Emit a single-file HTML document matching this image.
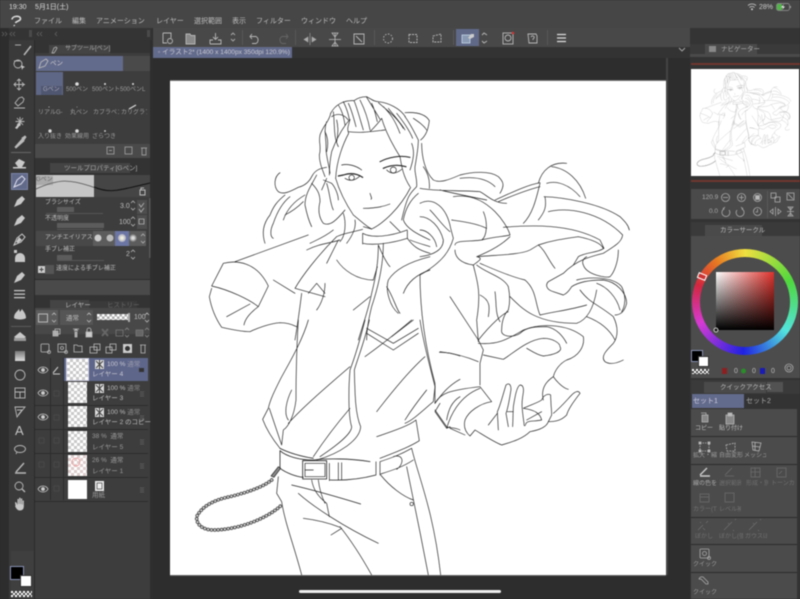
<!DOCTYPE html>
<html><head><meta charset="utf-8">
<style>
html,body{margin:0;padding:0;background:#2d2d2d}
#r{position:relative;width:800px;height:599px;overflow:hidden;background:#2d2d2d;filter:blur(.45px);font-family:"Liberation Sans","Noto Sans CJK JP",sans-serif;color:#bdbdbd}
#r div{position:absolute}
.t{white-space:nowrap;font-size:7px;line-height:9px}
.d{color:#9a9a9a}
.f{color:#707070}
.c{background:repeating-conic-gradient(#c9c9c9 0 25%,#fff 0 50%) 0 0/6px 6px}
svg{position:absolute;overflow:visible}
.i{fill:none;stroke:#b8b8b8;stroke-width:.9}
.w{fill:#c8c8c8;stroke:none}
.cell{background:#3d3d3d;width:27px;height:23px}
.row{left:35px;width:113px;height:23px;background:#3d3d3d}
.qs{left:691px;width:106px;background:#4b4b4b}
</style></head><body><div id="r">

<!-- top bars -->
<div style="left:0;top:0;width:800px;height:28px;background:#464646"></div>
<div class="t" style="left:9px;top:3px;color:#ddd">19:30</div>
<div class="t" style="left:35px;top:3px;color:#ddd">5月1日(土)</div>
<div class="t" style="left:759px;top:3px;color:#ccc">28%</div>
<svg style="left:0;top:0" width="800" height="30">
<path d="M748,5.500a6,6 0 0 1 8,0M749.500,7.500a3.500,3.500 0 0 1 5,0" class="i" stroke-width="1.200"/><circle cx="752" cy="9.300" r="1" class="w"/>
<rect x="776.500" y="3.500" width="13" height="7" rx="2" fill="none" stroke="#999" stroke-width=".7"/><rect x="777" y="4" width="5" height="6" rx="1" fill="#52b54a"/><path d="M784,4L781,7.500H783L782,10L785,6.500H783Z" fill="#eee"/><rect x="790" y="6" width="1" height="2" fill="#999"/>
<path d="M12,19.500C12,16 20,15 20.500,18.500C21,21 16,21 15.500,23M14.500,26L14,25" fill="none" stroke="#ddd" stroke-width="1.600"/>
</svg>
<div class="t" style="left:34px;top:17px">ファイル</div>
<div class="t" style="left:72px;top:17px">編集</div>
<div class="t" style="left:96px;top:17px">アニメーション</div>
<div class="t" style="left:156px;top:17px">レイヤー</div>
<div class="t" style="left:194px;top:17px">選択範囲</div>
<div class="t" style="left:232px;top:17px">表示</div>
<div class="t" style="left:256px;top:17px">フィルター</div>
<div class="t" style="left:301px;top:17px">ウィンドウ</div>
<div class="t" style="left:346px;top:17px">ヘルプ</div>

<!-- toolbar -->
<div style="left:9px;top:28px;width:143px;height:12px;background:#343434"></div>
<div style="left:153px;top:28px;width:537px;height:19px;background:#484848"></div>
<div style="left:456px;top:29px;width:23px;height:17px;background:#606988"></div>
<div style="left:690px;top:28px;width:110px;height:25px;background:#343434"></div>
<div style="left:153px;top:47px;width:537px;height:11px;background:#333"></div>
<div class="t" style="left:153px;top:47px;width:139px;height:11px;background:#636b8c;line-height:11px;text-indent:5px;font-size:6.600px;color:#c8c8d0">◦ イラスト2* (1400 x 1400px 350dpi 120.9%)</div>
<svg style="left:0;top:0" width="800" height="60">
<g class="i">
<path d="M163,33h8v5M163,33v10h4"/><circle cx="170" cy="41" r="2.500"/>
<path d="M186,44V34h4l1,1.500h4V44Z" fill="#8a8a8a"/>
<path d="M210,44h11v-4h-3M210,44v-4h3M215.500,33v6M213,37l2.500,2.500l2.500,-2.500"/>
<path d="M231,35l2,-2l2,2M231,39l2,2l2,-2" stroke="#aaa"/>
<path d="M252,34l-2,2.500l2,2.500M250,36.500h6a4,4 0 0 1 0,7h-4"/>
<path d="M286,34l2,2.500l-2,2.500M288,36.500h-6a4,4 0 0 0 0,7h4" stroke="#666"/>
<path d="M310,33v12M308,37l-4,2.500l4,2.500ZM312,37l4,2.500l-4,2.500Z" fill="#aaa" stroke="#aaa" stroke-width=".6"/>
<path d="M329,39.500h12M335,33v13M332,33h6l-3,4ZM332,46h6l-3,-4Z" stroke-width=".8"/>
<path d="M354,34h10v10h-10ZM356,36l6,6" />
<circle cx="388" cy="38.500" r="4.500" stroke-dasharray="1.500 1.500"/>
<rect x="409" y="34.500" width="8" height="8" stroke-dasharray="2 1"/>
<path d="M433,36l8,-2v8h-8Z" stroke-dasharray="2 1"/>
<rect x="462" y="35" width="8" height="8" fill="#8a9ab4" stroke="#bcd"/><path d="M468,38l3,-4h3v3l-4,2Z" fill="#ccc" stroke="none"/>
<path d="M482,35l2,-2l3,2M482,41l2,2l3,-2"/>
<rect x="503" y="33" width="10" height="11"/><circle cx="508" cy="38" r="3"/><circle cx="513" cy="33" r="1.300" fill="#c33" stroke="none"/>
<path d="M528,34h8l1,2v7h-8ZM531,37c1,-2 4,-1 3,1l-1,1v1"/>
<path d="M557,34.500h9M557,38h9M557,41.500h9" stroke-width="1.200" stroke="#ddd"/>
<path d="M679,48l3,3l3,-3" stroke="#aaa"/>
<path d="M2,32l2,2l-2,2M5,32l2,2l-2,2M12,32l-2,2l2,2M15,32l-2,2l2,2M39,32l-2,2l2,2M42,32l-2,2l2,2M57,32l-2,2l2,2" stroke="#666" stroke-width=".7"/>
</g>
<g stroke="#585858"><path d="M242.500,30v15M295.500,30v15M374.500,30v15M453.500,30v15M547.500,30v15"/></g>
<rect x="29" y="30" width="3" height="7" fill="#4a4a4a"/><rect x="147" y="30" width="3" height="7" fill="#4a4a4a"/><rect x="693" y="30" width="3" height="7" fill="#4a4a4a"/>
</svg>

<!-- canvas -->
<div style="left:170px;top:80px;width:496px;height:1px;background:#777"></div>
<div style="left:170px;top:81px;width:496px;height:494px;background:#fff"></div>
<div style="left:666px;top:58px;width:2px;height:517px;background:#444"></div>
<div style="left:170px;top:575px;width:496px;height:1px;background:#666"></div>
<div style="left:299px;top:590px;width:202px;height:3px;background:#eee;border-radius:2px"></div>

<svg style="left:0;top:0" width="800" height="599" id="artsvg">
<defs><clipPath id="cv"><rect x="170" y="81" width="496" height="494"/></clipPath></defs>
<g id="art" clip-path="url(#cv)" fill="none" stroke="#222" stroke-linecap="round" stroke-linejoin="round">
<g transform="translate(170,80) scale(.33333)" stroke-width="2">
<path d="M482,100C495,75 520,60 552,62C565,52 580,50 590,50C605,58 612,65 625,65C655,68 690,85 706,110"/>
<path d="M485,110C500,100 520,100 535,120M520,65C530,85 535,100 538,118M552,62C560,80 565,100 580,150M590,52C610,85 620,100 630,118M625,68C650,90 680,110 700,145M705,110C720,130 735,160 745,180M490,95C495,140 490,170 505,200M570,60C585,90 595,120 600,150M640,80C660,100 675,120 690,160M505,75C515,90 520,105 525,135M535,70C545,90 550,110 558,140M605,70C615,90 618,110 622,125M655,85C670,105 690,125 705,150M500,120C505,140 505,160 500,185M465,155C475,175 475,195 470,215M680,100C700,125 718,150 728,175"/>
<path d="M482,100C478,125 460,135 450,165C445,190 455,200 448,225C448,250 458,270 465,290M470,125C460,150 470,180 468,210C470,235 478,260 480,280"/>
<path d="M705,98C735,96 765,100 778,122C775,145 770,165 752,180M730,115C745,125 760,135 770,150M745,180C745,205 740,230 735,260C733,280 742,295 740,320C720,340 712,345 695,420M725,190C735,215 730,240 720,270M760,260C775,280 780,300 778,325"/>
<path d="M540,118C520,140 500,175 485,215C480,240 478,265 478,285M540,118C535,140 530,145 536,160C520,190 500,240 497,295M536,155C570,160 600,155 645,150M635,115C645,150 665,190 690,230C695,260 700,290 720,320M635,115C625,130 615,140 600,155"/>
<path d="M497,295C510,340 530,375 550,405C575,425 590,440 605,447C640,430 690,385 722,322"/>
<path d="M578,460L578,492M712,452L712,475M578,460C605,475 660,470 712,450M578,490C610,497 665,490 712,475M605,447L580,440M660,425L690,455"/>
<path d="M505,288L520,285C540,278 560,280 578,292" stroke-width="3.500"/><path d="M525,295C540,305 555,302 570,288"/><circle cx="545" cy="293" r="8"/>
<path d="M640,265C655,258 680,252 708,260" stroke-width="3.500"/><path d="M650,270C665,285 680,280 695,268"/><circle cx="670" cy="270" r="9"/>
<path d="M630,245C655,232 690,225 720,232" stroke-width="3"/><path d="M515,255C535,250 560,258 575,270"/>
<path d="M600,340C603,350 607,355 603,358M580,385C605,385 635,382 660,372"/>
<path d="M330,278C312,290 310,320 325,335C340,345 360,335 385,322C400,318 415,310 425,290C435,270 450,265 470,262"/>
<path d="M345,345C320,365 310,380 300,405C280,430 275,460 285,490M360,350C335,370 320,400 310,430C300,450 300,470 310,475M405,345C370,365 350,390 340,420M400,365C380,385 365,395 345,405"/>
<path d="M440,285C425,315 405,340 405,375C410,400 415,420 425,440M425,310C445,330 450,345 450,365C445,385 445,410 460,430C480,440 500,420 525,390M470,310C480,340 480,370 490,390M460,300L485,310C495,320 505,345 505,360M470,295L455,330M520,400C530,430 525,470 510,485M555,420C560,445 545,470 530,490"/>
<path d="M195,545L415,465M160,550L125,618M160,550C200,540 260,545 295,618M125,618C180,630 240,660 265,680L295,618M118,650L125,625M118,650C125,690 140,720 155,742C190,750 220,755 240,755C260,745 300,730 330,728C350,728 370,735 380,740M265,680C245,695 225,715 222,735M170,710L240,672M310,600L375,640"/>
<path d="M375,625C395,590 440,530 500,470C520,460 555,455 578,448M375,625L465,650M395,640C390,680 385,720 375,780M465,610C465,640 455,670 440,690M500,540C520,570 560,600 610,600L622,560M420,490C440,480 465,470 490,450M410,510C450,490 480,490 510,480M470,550L505,480M415,640L440,610L465,640"/>
<path d="M625,495C625,540 620,580 605,640C595,690 580,730 565,780M640,490C640,550 625,620 605,680C595,720 590,750 590,780M625,495C640,530 650,550 660,560M712,475C730,500 745,510 780,520M550,690L600,650"/>
<path d="M780,530C740,540 680,560 655,600C645,630 660,680 685,700M780,570C750,580 715,600 700,640M650,620C670,650 680,690 690,700M745,340C720,360 705,390 700,420C710,450 760,470 780,480M720,480C745,490 765,495 780,500M665,770L730,720"/>
</g>
<g transform="translate(420,140) scale(.33333)" stroke-width="2">
<path d="M5,10C5,50 15,95 40,120C60,130 85,120 120,105C160,95 210,92 235,110C250,125 255,135 240,160"/>
<path d="M0,145C50,155 120,150 180,155C200,165 220,190 260,190M225,180C270,160 320,135 360,128M235,185C270,170 320,150 360,140M120,115C160,110 200,115 225,140M60,150C100,160 150,170 200,180"/>
<path d="M360,130C350,170 340,220 310,250M355,130C365,90 395,65 440,70M395,80C440,85 480,120 497,175M375,170C380,200 375,215 355,240M380,130C410,120 450,135 480,170"/>
<path d="M372,170C430,172 540,190 600,230C615,245 625,255 628,270M385,215C440,200 540,215 608,285C605,305 590,315 550,340C510,350 470,360 430,400L385,425C375,435 380,450 400,455L430,465C440,460 445,455 455,440C470,430 500,420 550,420C590,425 620,460 620,490C615,510 605,525 585,525"/>
<path d="M250,262C330,255 450,250 540,300L552,325C530,340 500,335 475,350L460,375M355,315C400,300 440,295 475,290C500,295 540,305 550,325M175,350C220,345 300,345 330,330L355,315C375,330 385,360 405,385"/>
<path d="M105,315C105,300 150,305 185,300C220,290 250,290 270,285C265,265 245,235 225,215C200,190 160,160 100,170M105,330C105,350 120,370 160,375C180,360 190,355 170,350C220,330 250,310 270,290M190,215C205,250 200,290 185,300M95,240C130,245 170,250 200,265"/>
<path d="M0,190C40,170 80,200 92,265L100,295C90,330 70,365 0,405M0,230C30,230 60,260 70,300C70,330 40,345 0,350M0,270C20,270 45,290 50,320M30,210C50,230 70,260 90,275"/>
<path d="M170,375C200,400 250,410 265,440C270,465 270,490 265,510C255,520 245,540 245,570C240,590 280,595 300,580C320,560 350,560 380,560C410,565 430,590 440,610M180,370C215,385 270,410 315,420C350,450 345,490 360,525C400,515 450,510 500,495M270,470C310,510 350,550 470,550C500,540 520,510 530,450M175,600C215,550 250,520 265,515"/>
<path d="M175,610C230,615 260,600 310,570C360,550 440,550 490,590C495,620 475,650 440,660C420,670 405,690 400,710C410,725 430,745 445,748M480,450C510,490 530,490 580,530C595,560 595,590 580,610C560,630 540,650 555,665C570,675 590,670 610,660M500,530C540,545 570,570 585,600"/>
<path d="M190,645L250,658C280,640 320,600 370,595C400,595 420,610 420,620C430,635 400,645 370,648C350,645 330,630 320,625M175,600L190,630L180,670L180,735M160,375C170,420 185,450 170,540L175,605M180,465C210,480 210,500 205,530M225,455C230,490 225,520 240,545"/>
<path d="M595,330C595,370 580,400 570,410C560,415 500,405 490,375C485,365 490,355 500,350M470,420C510,410 580,410 605,440C620,470 615,500 605,515M530,430C560,440 590,470 600,510"/>
<path d="M0,405C0,490 10,600 45,730L45,790M90,470L175,600M60,635C100,640 140,650 175,665"/>
<path d="M45,790C60,760 90,750 180,740L215,785M45,815L80,865L90,860M45,815L60,790M80,865C90,830 115,770 180,745M90,865L135,885M135,840C145,815 180,790 215,785M135,840C130,860 135,875 150,888L165,870C190,885 220,905 245,915C280,905 310,895 330,875C360,870 380,860 385,845M205,855L232,820"/>
<path d="M235,870L232,815C240,800 250,760 258,735C270,725 275,740 272,755C268,780 262,810 258,820L265,860M278,860L280,800C285,770 290,740 300,735C312,735 312,750 308,770C305,790 305,800 312,850C312,860 315,860 318,850C325,840 345,845 365,840C360,820 345,810 310,805C330,795 350,790 365,780C370,765 385,760 392,765C392,790 395,810 395,825L385,845C410,845 425,840 440,825C445,805 465,780 480,760C475,750 465,755 455,765C445,775 425,800 400,820M262,815L280,815M320,840L365,815M370,780C360,740 385,720 400,710"/>
</g>
<g transform="translate(170,320) scale(.33333)" stroke-width="2">
<path d="M415,0C395,70 345,150 330,180C315,210 300,240 295,265L278,298C290,330 310,360 330,385M385,0C380,80 378,170 378,240C372,290 355,320 340,330L335,375M298,265L335,375M355,310C400,260 470,200 540,140M365,210C350,240 340,280 355,300"/>
<path d="M585,0C570,60 555,110 540,150C535,210 535,290 545,320C545,340 510,370 450,410M598,0C585,60 565,110 553,150C555,220 555,280 572,320C570,360 510,400 440,420M590,25L670,70L745,25M590,40L670,90L745,40M585,110C640,70 690,30 725,0"/>
<path d="M620,275C670,210 720,150 765,110M750,0C760,70 780,140 795,200M795,200L790,245C760,270 730,300 705,310M620,350C680,330 720,315 738,300L748,362C720,380 680,395 630,415M705,300C730,260 750,235 770,210M430,410C470,350 510,300 540,265"/>
<path d="M808,97C830,97 850,100 870,108M795,250C810,230 830,200 870,178M795,270L830,320C840,325 855,322 870,330M830,300C835,270 845,245 870,230"/>
<path d="M330,392C350,410 390,420 430,420C470,415 540,415 600,425M330,385C360,400 400,410 430,415M330,392L330,445M330,445C350,460 380,470 400,472" stroke-width="2.400"/>
<rect x="398" y="422" width="72" height="55" stroke-width="2.400"/><rect x="405" y="430" width="60" height="40"/><path d="M405,450h25"/>
<path d="M478,430L478,482M505,428L505,480M515,428L515,480M480,480C530,482 580,475 618,465M618,425L618,465M630,425L630,465M632,462C670,450 700,440 730,420M630,425C660,415 690,405 725,385M670,410C700,400 705,430 680,448"/>
<path d="M325,470L320,520L335,545C345,610 370,670 395,765M725,385C745,470 790,570 812,765M710,440C725,510 755,660 775,765M632,465C660,500 700,530 730,540M365,495C430,510 500,530 572,552M385,520C430,560 520,620 625,670M400,595C440,600 480,610 510,622M483,645L515,625M510,620C550,670 580,720 605,765M425,480C430,510 445,530 470,550L478,590M445,480C450,520 460,540 465,550"/>
<circle cx="725" cy="552" r="5"/>
<path d="M303,468L325,440L332,445L312,472Z" fill="#888"/>
<path d="M305,480C280,500 240,515 180,530C130,540 95,560 80,590C78,615 100,630 130,630C190,630 280,605 335,555" stroke="#555" stroke-width="11" stroke-dasharray=".1 10"/>
<path d="M305,480C280,500 240,515 180,530C130,540 95,560 80,590C78,615 100,630 130,630C190,630 280,605 335,555" stroke="#f4f4f4" stroke-width="5" stroke-dasharray=".1 10"/>
</g>
</g>
</svg>

<!-- left tool strip -->
<div style="left:9px;top:40px;width:25px;height:559px;background:#3a3a3a"></div>
<div style="left:11px;top:173px;width:17px;height:17px;background:#626a8a;border:1px solid #7a83a8;box-sizing:border-box"></div>
<div style="left:11px;top:551px;width:23px;height:48px;background:#3f3f3f"></div>
<div style="left:10px;top:566px;width:14px;height:14px;background:#000;border:1px solid #8990b4;box-sizing:border-box"></div>
<div style="left:20px;top:575px;width:12px;height:12px;background:#fff;border:1px solid #333;box-sizing:border-box"></div>
<div style="left:11px;top:591px;width:21px;height:6px;background:repeating-conic-gradient(#444 0 25%,#fff 0 50%) 0 0/4px 4px"></div>
<svg style="left:0;top:0" width="36" height="599">
<g class="i">
<path d="M15,45h6"/>
<path d="M24,55L31,46" stroke-width="1.500"/>
<circle cx="18" cy="64" r="4"/><path d="M14,61h6"/><path d="M21,65l4,2l-2,1l-1,2Z" class="w"/>
<path d="M19,79v11M14,84.500h11M17,81l2,-2l2,2M17,88l2,2l2,-2M16,82.500l-2,2l2,2M22,82.500l2,2l-2,2"/>
<path d="M15,103l4,-5l3,-1l2,2l-1,3l-5,4ZM14,108h11" />
<path d="M20,117v9M15.500,121.500h9M17,118l6,7M23,118l-6,7" fill="none"/><path d="M15,128l4,-5l2,1l-4,5Z" class="w"/>
<path d="M15,147l7,-8l2,2l-8,7ZM22,138l3,-2l1,1l-2,3Z" fill="#bbb"/>
<path d="M11,152.500h20" stroke="#666"/>
</g>
<g class="w">
<path d="M15,163l4,-4l6,3l-3,5l-4,0Z"/><path d="M13,167h13v1.500h-13Z"/>
<path d="M14,187l3,-7l5,-4l3,3l-4,5Z" fill="none" stroke="#e0e0ee" stroke-width="1"/>
<path d="M14,207l3,-7l5,-4l3,3l-4,5Z"/>
<path d="M14,226l3,-7l5,-4l3,3l-4,5Z"/>
<path d="M14,245l3,-7l5,-4l3,3l-4,5Z" fill="none" stroke="#ccc"/><path d="M16,242l3,-5l3,3l-4,3Z"/>
<path d="M15,262h10v-4a4,4 0 0 0 -10,0Z"/><path d="M14,250h3v3h-3Z"/>
<path d="M14,283l3,-7l5,-4l3,3l-4,5Z"/>
<path d="M14,290h11v1.200h-11ZM14,293.500h11v1.200h-11ZM14,297h11v1.200h-11Z"/>
<path d="M14,318c0,-5 3,-6 5,-9l1,3l2,-3c2,3 4,5 4,9c-2,2 -10,2 -12,0Z"/>
<path d="M11,326h20v.7h-20Z" fill="#666"/>
<path d="M14,337l6,-5l6,5l-6,4Z"/><path d="M14,338h12v3h-12Z" fill="#999"/>
</g>
<defs><linearGradient id="g1" x1="0" y1="0" x2="0" y2="1"><stop offset="0" stop-color="#777"/><stop offset="1" stop-color="#ddd"/></linearGradient></defs>
<rect x="15" y="351" width="10" height="10" fill="url(#g1)"/>
<g class="i">
<circle cx="20" cy="375" r="5"/>
<rect x="15" y="388" width="10" height="10"/><path d="M15,392h10M20,392v6"/>
<path d="M15,407h10l-8,10ZM17,410h5l-4,5"/>
<ellipse cx="20" cy="449" rx="5.500" ry="3.500"/><path d="M17,452l-1,2"/>
<path d="M15,473h11M16,472l8,-9" stroke-width="1.400"/>
<circle cx="19" cy="486" r="4"/><path d="M22,489l3,3" stroke-width="1.300"/>
</g>
<path class="w" d="M15.500,506l-.5,-4l1.500,.5l1,2.500v-6h1.300v5h.4v-6.300h1.300v6.300h.4v-5.500h1.300v6h.4v-4h1.200v6c0,2.500 -1.500,4 -4,4c-2,0 -3.800,-2 -4.800,-4.500Z"/>
</svg>
<div class="t" style="left:15px;top:423px;font-size:13px;line-height:15px;color:#c4c4c4">A</div>
<div style="left:34px;top:40px;width:1px;height:559px;background:#2a2a2a"></div>

<!-- sub tool panel -->
<div style="left:35px;top:40px;width:117px;height:559px;background:#3d3d3d"></div>
<div style="left:150px;top:40px;width:3px;height:559px;background:#2e2e2e"></div>
<div style="left:35px;top:40px;width:115px;height:13px;background:#333"></div>
<div style="left:49px;top:45px;width:61px;height:9px;background:#444"></div>
<div class="t" style="left:65px;top:45px;font-size:6px;line-height:9px;color:#aaa">サブツール[ペン]</div>
<div style="left:36px;top:56px;width:87px;height:15px;background:#636b8c"></div>
<div style="left:123px;top:56px;width:27px;height:15px;background:#4a4a4a"></div>
<div class="t" style="left:50px;top:59px;color:#ccc;font-size:6.500px">ペン</div>
<div class="cell" style="left:36px;top:72px;background:#5f6786"></div>
<div class="cell" style="left:64px;top:72px"></div><div class="cell" style="left:92px;top:72px"></div><div class="cell" style="left:120px;top:72px"></div>
<div class="cell" style="left:36px;top:96px"></div><div class="cell" style="left:64px;top:96px"></div><div class="cell" style="left:92px;top:96px"></div><div class="cell" style="left:120px;top:96px"></div>
<div class="cell" style="left:36px;top:120px"></div><div class="cell" style="left:64px;top:120px"></div><div class="cell" style="left:92px;top:120px"></div>
<div style="left:35px;top:144px;width:115px;height:14px;background:#4a4a4a"></div>
<div class="t d" style="left:41px;top:86px;font-size:6px;background:#4f5670;padding:0 2px;color:#aab">Gペン</div>
<div class="t d" style="left:66px;top:86px;font-size:6px;width:25px;overflow:hidden">500ペン</div>
<div class="t d" style="left:92px;top:86px;font-size:6px;width:27px;overflow:hidden">500ペントレ</div>
<div class="t d" style="left:120px;top:86px;font-size:6px;width:27px;overflow:hidden">500ペンL</div>
<div class="t d" style="left:38px;top:109px;font-size:6px;width:25px;overflow:hidden">リアルG-</div>
<div class="t d" style="left:70px;top:109px;font-size:6px">丸ペン</div>
<div class="t d" style="left:93px;top:109px;font-size:6px;width:26px;overflow:hidden">カブラペン</div>
<div class="t d" style="left:121px;top:109px;font-size:6px;width:26px;overflow:hidden">カリグラフ</div>
<div class="t d" style="left:38px;top:133px;font-size:6px;width:25px;overflow:hidden">入り抜き</div>
<div class="t d" style="left:65px;top:133px;font-size:6px;width:26px;overflow:hidden">効果線用</div>
<div class="t d" style="left:92px;top:133px;font-size:6px;width:27px;overflow:hidden">ざらつき</div>
<svg style="left:0;top:0" width="155" height="160">
<g fill="#ddd"><circle cx="77" cy="84" r="1.800"/><circle cx="105" cy="84" r="1"/><circle cx="133" cy="84" r="1"/><circle cx="49" cy="107" r=".5"/><circle cx="77" cy="107" r=".4"/><circle cx="50" cy="131" r="1.700"/><circle cx="77" cy="131" r="1.800"/><circle cx="105" cy="131" r=".9"/></g>
<path d="M129,109l7,-4" stroke="#ddd" stroke-width="1.200"/>
<g class="i" stroke-width=".8"><path d="M39,68l2,-6l5,-3l2,2l-3,5Z"/><path d="M52,53l2,-5l2,-1l1,1l-1,2l-2,3Z" stroke="#aaa"/><rect x="107" y="147" width="7" height="7" stroke="#999"/><rect x="125" y="147" width="7" height="7" stroke="#999"/><path d="M141,148h6M142,148v7h4v-7M109,150.500h3" stroke="#999"/></g>
</svg>

<!-- tool property -->
<div style="left:35px;top:158px;width:115px;height:17px;background:#333"></div>
<div style="left:50px;top:163px;width:80px;height:10px;background:#444"></div>
<div class="t" style="left:64px;top:164px;font-size:6.500px;color:#aaa">ツールプロパティ[Gペン]</div>
<div style="left:36px;top:175px;width:58px;height:22px;background:#c6c6c6"></div>
<div style="left:94px;top:175px;width:56px;height:22px;background:#454545"></div>
<div class="t" style="left:36px;top:176px;font-size:6px;background:#aaa;color:#666">Gペン</div>
<svg style="left:0;top:0" width="155" height="300">
<path d="M36,189C60,178 70,180 90,186C110,194 120,190 150,183" fill="none" stroke="#555" stroke-width=".8"/>
<path d="M94,187C110,194 120,190 150,183" fill="none" stroke="#111" stroke-width="1"/>
<path d="M140,190h5v5h-5ZM141,190v-2h3" fill="none" stroke="#bbb"/>
<path d="M46,213.500h57M57,229.500h46" stroke="#555"/>
<rect x="57" y="207" width="17" height="5" fill="#5c5c5c"/><rect x="57" y="223" width="47" height="5" fill="#5c5c5c"/><rect x="57" y="255" width="15" height="5" fill="#5c5c5c"/>
<path d="M57,260.500h47" stroke="#555"/>
<rect x="137" y="200" width="10" height="14" fill="#4e4e4e"/><rect x="137" y="215" width="10" height="14" fill="#4e4e4e"/>
<rect x="149" y="198" width="1.500" height="60" fill="#565656"/>
<rect x="36" y="231" width="110" height="15" fill="#484848"/>
<rect x="93" y="231" width="53" height="15" fill="#5c5c5c"/><rect x="115" y="231" width="14" height="15" fill="#6c76a4"/>
<circle cx="98" cy="238" r="3.500" fill="#ccc"/><circle cx="110" cy="238" r="3.500" fill="#bbb"/>
<defs><radialGradient id="g2"><stop offset=".2" stop-color="#f2f2e0"/><stop offset="1" stop-color="#aab"/></radialGradient><radialGradient id="g3"><stop offset=".3" stop-color="#ddd"/><stop offset="1" stop-color="#666"/></radialGradient></defs>
<circle cx="122" cy="238" r="4" fill="url(#g2)"/><circle cx="133" cy="238" r="4" fill="url(#g3)"/>
<g fill="none" stroke="#b4b4b4" stroke-width=".8">
<path d="M131,203l2,-2l2,2M131,208l2,2l2,-2M131,219l2,-2l2,2M131,224l2,2l2,-2M141,236l2,-2l2,2M141,241l2,2l2,-2M131,252l2,-2l2,2M131,257l2,2l2,-2"/>
<path d="M139,204l2,3l3,-4M139,209l2,3l3,-4M139,219h5v5h-5Z"/>
<circle cx="128" cy="288" r="4"/><path d="M128,285.500v3h-2M141,284a3,3 0 0 1 2,4l3,3l-1,1l-3,-3a3,3 0 0 1 -4,-2"/>
</g>
<rect x="38" y="266" width="7" height="7" fill="#ccc"/><path d="M39.500,269.500h4M41.500,267.500v4" stroke="#444"/>
<rect x="45" y="265" width="9" height="9" fill="#555"/>
</svg>
<div class="t" style="left:45px;top:199px;font-size:6px">ブラシサイズ</div>
<div class="t" style="left:45px;top:215px;font-size:6px">不透明度</div>
<div class="t" style="left:45px;top:234px;font-size:6px">アンチエイリアス</div>
<div class="t" style="left:45px;top:246px;font-size:6px">手ブレ補正</div>
<div class="t" style="left:56px;top:265px;font-size:6px">速度による手ブレ補正</div>
<div class="t" style="left:120px;top:202px">3.0</div>
<div class="t" style="left:119px;top:218px">100</div>
<div class="t" style="left:126px;top:250px">2</div>
<div style="left:35px;top:279px;width:115px;height:1px;background:#2c2c2c"></div>
<div style="left:35px;top:280px;width:115px;height:15px;background:#4a4a4a"></div>

<!-- layer panel -->
<div style="left:35px;top:295px;width:115px;height:13px;background:#333"></div>
<div style="left:50px;top:300px;width:39px;height:9px;background:#444"></div>
<div style="left:89px;top:301px;width:48px;height:8px;background:#3a3a3a"></div>
<div class="t" style="left:65px;top:301px;font-size:6.500px;color:#bbb">レイヤー</div>
<div class="t" style="left:107px;top:301px;font-size:6.500px;color:#666">ヒストリー</div>
<div style="left:35px;top:308px;width:115px;height:26px;background:#484848"></div>
<div style="left:36px;top:310px;width:22px;height:15px;background:#5c5c5c"></div>
<div style="left:60px;top:310px;width:33px;height:15px;background:#555"></div>
<div style="left:97px;top:314px;width:32px;height:6px;background:repeating-conic-gradient(#aaa 0 25%,#fff 0 50%) 0 0/5px 5px"></div>
<div style="left:128px;top:313px;width:2px;height:9px;background:#aaa"></div>
<div class="t" style="left:66px;top:314px;font-size:6.500px">通常</div>
<div class="t" style="left:134px;top:313px">100</div>
<svg style="left:0;top:0" width="155" height="380">
<g fill="none" stroke="#b8b8b8" stroke-width=".8">
<rect x="38.500" y="314" width="9" height="8" stroke-width="1"/><path d="M52,315l2,-2l2,2M52,320l2,2l2,-2M87,315l2,-2l2,2M87,320l2,2l2,-2M145,315l2,-2l2,2M145,320l2,2l2,-2"/>
<rect x="53" y="331" width="5" height="5" fill="#aaa"/><rect x="55" y="329" width="5" height="5"/>
<path d="M73,329h6M75,332h2v5h-2ZM74,331l2,-2l2,2" fill="#aaa"/>
<rect x="86" y="332" width="6" height="5" fill="#ccc"/><path d="M87,332v-2a2,2 0 0 1 4,0v2"/>
<path d="M102,329l6,7M108,329l-6,7" stroke="#666" stroke-width="2"/>
<rect x="116" y="330" width="7" height="6" stroke="#777"/><path d="M125,330l2,-2l2,2M125,335l2,2l2,-2" stroke="#888"/>
<rect x="136" y="330" width="7" height="6" stroke="#777" fill="#666"/><path d="M145,330l2,-2l2,2M145,335l2,2l2,-2" stroke="#888"/>
<rect x="41" y="344" width="8" height="8" rx="1"/><circle cx="49" cy="352" r="1.500"/>
<rect x="58" y="344" width="8" height="8"/><circle cx="62" cy="348" r="1.500"/><circle cx="66" cy="352" r="1.500"/>
<path d="M74,345h3l1,1h4v6h-8ZM82,352h1"/>
<rect x="90" y="347" width="7" height="6"/><rect x="94" y="344" width="6" height="6"/>
<rect x="106" y="347" width="6" height="6"/><rect x="110" y="344" width="6" height="6"/>
<path d="M140,345h6M141,345v8h4v-8"/>
</g>
<rect x="123" y="344" width="9" height="9" fill="#ccc"/><circle cx="127.500" cy="348.500" r="2.500" fill="#333"/>
</svg>

<div class="row" style="top:358px;height:23px;left:64px;width:84px;background:#5e668a"></div>
<div class="row" style="top:382px;background:#3d3d3d;border-bottom:1px solid #2c2c2c"></div>
<div class="row" style="top:406px;border-bottom:1px solid #2c2c2c"></div>
<div class="row" style="top:430px;border-bottom:1px solid #2c2c2c"></div>
<div class="row" style="top:454px;border-bottom:1px solid #2c2c2c"></div>
<div class="row" style="top:478px;border-bottom:1px solid #2c2c2c"></div>
<div style="left:50px;top:358px;width:1px;height:142px;background:#2c2c2c"></div>
<div style="left:63px;top:358px;width:1px;height:142px;background:#2c2c2c"></div>

<div class="c" style="left:67px;top:359px;width:21px;height:21px;outline:1px solid #ccd"></div>
<div class="c" style="left:68px;top:382px;width:19px;height:21px"></div>
<div class="c" style="left:68px;top:406px;width:19px;height:21px"></div>
<div class="c" style="left:68px;top:431px;width:19px;height:21px"></div>
<div class="c" style="left:68px;top:455px;width:19px;height:21px;background:repeating-conic-gradient(#dcc 0 25%,#fff 0 50%) 0 0/6px 6px"></div>
<div style="left:68px;top:480px;width:19px;height:19px;background:#fff"></div>
<svg style="left:0;top:0" width="155" height="510">
<circle cx="76" cy="462" r="4" fill="none" stroke="#e99" stroke-width=".8"/>
<g fill="none" stroke="#ccc" stroke-width=".8">
<path d="M38,370c2,-4 8,-4 10,0c-2,4 -8,4 -10,0Z"/><circle cx="43" cy="370" r="1.500" fill="#ccc"/>
<path d="M38,393c2,-4 8,-4 10,0c-2,4 -8,4 -10,0Z"/><circle cx="43" cy="393" r="1.500" fill="#ccc"/>
<path d="M38,417c2,-4 8,-4 10,0c-2,4 -8,4 -10,0Z"/><circle cx="43" cy="417" r="1.500" fill="#ccc"/>
<path d="M38,489c2,-4 8,-4 10,0c-2,4 -8,4 -10,0Z"/><circle cx="43" cy="489" r="1.500" fill="#ccc"/>
<path d="M53,374h7M53,373l5,-6" stroke-width="1"/>
</g>
<g fill="none" stroke="#4a4a4a" stroke-width=".8"><rect x="39" y="438" width="5" height="5"/><rect x="39" y="462" width="5" height="5"/><rect x="54" y="391" width="5" height="5"/><rect x="54" y="415" width="5" height="5"/><rect x="54" y="438" width="5" height="5"/><rect x="54" y="462" width="5" height="5"/><rect x="54" y="486" width="5" height="5"/></g>
<g fill="none" stroke="#666" stroke-width=".8">
<path d="M140,392h4M140,394h4M140,396h4M140,416h4M140,418h4M140,420h4M140,440h4M140,442h4M140,444h4M140,464h4M140,466h4M140,468h4M140,488h4M140,490h4M140,492h4"/>
</g>
<path d="M139,368h5v4h-5Z" fill="#333"/>
<g>
<rect x="95" y="360" width="9" height="9" fill="#ddd"/><path d="M96,361l7,7M103,361l-7,7M99.500,360v9" stroke="#444"/>
<rect x="95" y="384" width="9" height="9" fill="#ddd"/><path d="M96,385l7,7M103,385l-7,7M99.500,384v9" stroke="#444"/>
<rect x="95" y="408" width="9" height="9" fill="#ddd"/><path d="M96,409l7,7M103,409l-7,7M99.500,408v9" stroke="#444"/>
<rect x="95" y="481" width="9" height="10" fill="#eee"/><rect x="97" y="483" width="5" height="6" fill="none" stroke="#444" stroke-width=".7"/>
</g>
</svg>
<div class="t" style="left:107px;top:360px;font-size:6.500px;color:#c8c8d0">100 %<span style="color:#9a9aaa"> 通常</span></div>
<div class="t" style="left:92px;top:370px;font-size:6.500px;color:#c8c8d0">レイヤー 4</div>
<div class="t" style="left:107px;top:384px;font-size:6.500px">100 %<span style="color:#888"> 通常</span></div>
<div class="t" style="left:92px;top:394px;font-size:6.500px">レイヤー 3</div>
<div class="t" style="left:107px;top:408px;font-size:6.500px">100 %<span style="color:#888"> 通常</span></div>
<div class="t" style="left:92px;top:418px;font-size:6.500px">レイヤー 2 のコピー</div>
<div class="t d" style="left:92px;top:432px;font-size:6.500px">38 %&nbsp; 通常</div>
<div class="t d" style="left:92px;top:443px;font-size:6.500px">レイヤー 5</div>
<div class="t d" style="left:92px;top:456px;font-size:6.500px">26 %&nbsp; 通常</div>
<div class="t d" style="left:92px;top:467px;font-size:6.500px">レイヤー 1</div>
<div class="t d" style="left:92px;top:491px;font-size:6.500px">用紙</div>

<!-- right dark gap -->
<div style="left:690px;top:47px;width:110px;height:552px;background:#333"></div>
<div style="left:690px;top:28px;width:110px;height:16px;background:#343434"></div>
<div style="left:690px;top:44px;width:110px;height:10px;background:#3a3a3a"></div>
<div style="left:705px;top:44px;width:52px;height:10px;background:#4a4a4a"></div>
<div class="t" style="left:721px;top:45px;font-size:6.500px;color:#aaa">ナビゲーター</div>
<div style="left:690px;top:54px;width:110px;height:3px;background:#4a4a4a"></div>
<div style="left:691px;top:63px;width:109px;height:2px;background:#70362f"></div>
<div style="left:691px;top:180px;width:109px;height:2px;background:#70362f"></div>
<div style="left:691px;top:69px;width:108px;height:107px;background:#fff"></div>
<svg style="left:691px;top:69px" width="108" height="107" viewBox="170 81 496 494"><use href="#art" opacity=".7"/></svg>

<div style="left:691px;top:189px;width:109px;height:30px;background:#4a4a4a"></div>
<div class="t" style="left:702px;top:193px;font-size:6.500px;color:#aaa">120.9</div>
<div class="t" style="left:709px;top:207px;font-size:6.500px;color:#aaa">0.0</div>
<svg style="left:0;top:0" width="800" height="240">
<g fill="none" stroke="#aaa" stroke-width=".8">
<circle cx="725.500" cy="197.500" r="4"/><path d="M723,197.500h5"/>
<circle cx="741.500" cy="197.500" r="4"/><path d="M739,197.500h5M741.500,195v5"/>
<circle cx="757.500" cy="197.500" r="4"/><rect x="755.500" y="195.500" width="4" height="4" fill="#bbb"/>
<rect x="771" y="193" width="5" height="5"/><rect x="775" y="197" width="5" height="5"/><rect x="787" y="193" width="7" height="7"/><path d="M788,194l5,5"/>
<path d="M729,210a4,4 0 1 1 -5,-1l-1,-1M723,209l2,-2"/>
<path d="M737,210a4,4 0 1 0 5,-1l1,-1M743,209l-2,-2"/>
<circle cx="757.500" cy="211.500" r="4"/><path d="M757.500,209v3h-2"/>
<path d="M775.500,207v9M773,209l-3,2.500l3,2.500ZM778,209l3,2.500l-3,2.500Z"/>
<path d="M787,211.500h7M790.500,207v9M788,207h5l-2.500,3ZM788,216h5l-2.500,-3Z"/>
</g>
<path d="M767.500,191v27" stroke="#5a5a5a"/>
<g fill="none" stroke="#aaa" stroke-width=".8"><circle cx="712" cy="229" r="3.500"/><circle cx="712" cy="229" r="1.800" fill="#aaa"/></g>
<rect x="767" y="225" width="8" height="5" fill="#777"/><rect x="785" y="225" width="8" height="5" fill="#777"/>
<rect x="709" y="46" width="7" height="6" fill="#888"/>
</svg>

<!-- color panel -->
<div style="left:691px;top:222px;width:109px;height:14px;background:#3a3a3a"></div>
<div style="left:705px;top:225px;width:57px;height:11px;background:#4a4a4a"></div>
<div class="t" style="left:720px;top:226px;font-size:6.500px;color:#bbb">カラーサークル</div>
<div style="left:691px;top:236px;width:109px;height:142px;background:#4c4c4c"></div>
<div style="left:692px;top:249px;width:106px;height:106px;border-radius:50%;background:conic-gradient(#f0e040 0deg,#4fd83e 65deg,#52e4dc 125deg,#1f22e0 182deg,#d63bd2 245deg,#d2273f 290deg,#e67a22 325deg,#f0e040 360deg)"></div>
<div style="left:700px;top:257px;width:90px;height:90px;border-radius:50%;background:#4c4c4c"></div>
<div style="left:716px;top:272px;width:58px;height:58px;background:linear-gradient(to top,#000,rgba(0,0,0,0)),linear-gradient(to right,#fff,#e0322c)"></div>
<svg style="left:0;top:0" width="800" height="400">
<rect x="-4" y="-2.500" width="8" height="5" transform="translate(702,276.500) rotate(22)" fill="#c33" stroke="#fff" stroke-width="1"/>
<circle cx="716" cy="330" r="2" fill="#222" stroke="#eee" stroke-width=".8"/>
<rect x="722" y="368" width="5" height="6" fill="#8c2020"/><circle cx="743.500" cy="371" r="2.500" fill="#2a8c2a"/><rect x="760" y="368" width="5" height="6" fill="#1a1ab4"/>
<circle cx="789" cy="368" r="4" fill="none" stroke="#aaa" stroke-width=".8"/><circle cx="789" cy="368" r="2" fill="none" stroke="#aaa" stroke-width=".8"/>
<circle cx="712" cy="387" r="3.500" fill="none" stroke="#ccc" stroke-width="1"/>
</svg>
<div style="left:691px;top:350px;width:12px;height:12px;background:#000;border:1px solid #8990b4;box-sizing:border-box"></div>
<div style="left:698px;top:356px;width:11px;height:11px;background:#fff;border:1px solid #333;box-sizing:border-box"></div>
<div style="left:692px;top:369px;width:17px;height:5px;background:repeating-conic-gradient(#444 0 25%,#fff 0 50%) 0 0/4px 4px"></div>
<div class="t" style="left:734px;top:367px;color:#bbb">0</div>
<div class="t" style="left:752px;top:367px;color:#bbb">0</div>
<div class="t" style="left:771px;top:367px;color:#bbb">0</div>

<!-- quick access -->
<div style="left:691px;top:380px;width:109px;height:14px;background:#3a3a3a"></div>
<div style="left:704px;top:382px;width:62px;height:11px;background:#4a4a4a"></div>
<div style="left:767px;top:382px;width:16px;height:10px;background:#525252"></div>
<div class="t" style="left:720px;top:383px;font-size:6.500px;color:#bbb">クイックアクセス</div>
<div style="left:692px;top:394px;width:52px;height:14px;background:#636b8c"></div>
<div class="t" style="left:693px;top:397px;color:#ccd">セット1</div>
<div class="t" style="left:746px;top:397px;color:#aaa">セット2</div>
<div class="qs" style="top:409px;height:27px"></div>
<div class="qs" style="top:437px;height:27px"></div>
<div class="qs" style="top:465px;height:52px"></div>
<div class="qs" style="top:518px;height:26px"></div>
<div class="qs" style="top:545px;height:27px"></div>
<div class="qs" style="top:573px;height:26px"></div>
<div class="t" style="left:695px;top:425px;font-size:6px">コピー</div>
<div class="t" style="left:719px;top:425px;font-size:6px">貼り付け</div>
<div class="t d" style="left:693px;top:452px;font-size:6px;width:24px;overflow:hidden">拡大・縮小</div>
<div class="t d" style="left:719px;top:452px;font-size:6px">自由変形</div>
<div class="t d" style="left:744px;top:452px;font-size:6px;width:22px;overflow:hidden">メッシュ変形</div>
<div class="t" style="left:693px;top:480px;font-size:6px;width:24px;overflow:hidden;color:#aaa">線の色を描</div>
<div class="t f" style="left:719px;top:480px;font-size:6px;width:22px;overflow:hidden">選択範囲に</div>
<div class="t f" style="left:746px;top:480px;font-size:6px;width:22px;overflow:hidden">形成・別に</div>
<div class="t f" style="left:771px;top:480px;font-size:6px;width:24px;overflow:hidden">トーンカー</div>
<div class="t f" style="left:693px;top:506px;font-size:6px;width:24px;overflow:hidden">カラー(T)</div>
<div class="t f" style="left:719px;top:506px;font-size:6px;width:22px;overflow:hidden">レベル補正</div>
<div class="t f" style="left:695px;top:533px;font-size:6px">ぼかし</div>
<div class="t f" style="left:719px;top:533px;font-size:6px;width:24px;overflow:hidden">ぼかし(強)</div>
<div class="t f" style="left:745px;top:533px;font-size:6px;width:22px;overflow:hidden">ガウスぼかし</div>
<div class="t d" style="left:693px;top:561px;font-size:6px;width:24px;overflow:hidden">クイック:</div>
<div class="t d" style="left:693px;top:589px;font-size:6px;width:24px;overflow:hidden">クイック:</div>
<svg style="left:0;top:0" width="800" height="599">
<g fill="none" stroke="#b4b4b4" stroke-width=".8">
<rect x="702" y="415" width="6" height="7" fill="#888"/><path d="M701,413h5v2"/>
<rect x="726" y="415" width="8" height="9" fill="#888"/><rect x="728" y="413" width="4" height="3" fill="#bbb"/>
<rect x="700" y="443" width="9" height="8" stroke-dasharray="1.500 1"/><rect x="699" y="442" width="2" height="2" fill="#bbb"/><rect x="708" y="442" width="2" height="2" fill="#bbb"/><rect x="699" y="450" width="2" height="2" fill="#bbb"/><rect x="708" y="450" width="2" height="2" fill="#bbb"/>
<path d="M726,445l9,-2v8h-8Z" stroke-dasharray="2 1"/>
<path d="M752,442l9,1l-2,8l-6,-1ZM755,442v8M752,446l8,1"/>
</g>
<path d="M700,476h10M700,475l7,-7" stroke="#ccc" stroke-width="1.400" fill="none"/>
<g fill="none" stroke="#6c6c6c" stroke-width=".8">
<path d="M725,476h9M725,475l7,-7"/><rect x="751" y="468" width="9" height="9"/><path d="M751,472h9M755,468v9"/><rect x="777" y="468" width="9" height="9"/><path d="M782,471l-3,3"/>
<rect x="700" y="494" width="9" height="8"/><path d="M700,497h9"/><rect x="725" y="493" width="9" height="9"/>
<path d="M698,530l5,-5M706,523l2,-2M703,528l2,2M700,522l1,1M724,530l8,-8M735,520l1,-1M728,523l1,1M733,530l1,1M749,530l8,-8M760,520l1,-1M753,523l1,1M758,530l1,1"/>
</g>
<g fill="none" stroke="#aaa" stroke-width=".8"><rect x="700" y="549" width="9" height="9" rx="1"/><circle cx="704.500" cy="553.500" r="2"/><circle cx="709" cy="558" r="1.500"/><path d="M699,579a3,3 0 0 1 4,-2l5,5v2l-2,0l-5,-5a3,3 0 0 1 -2,0Z"/></g>
<g stroke="#2c2c2c"><path d="M691,436.500h106M691,464.500h106M691,517.500h106M691,544.500h106M691,572.500h106"/></g>
</svg>
</div></body></html>
